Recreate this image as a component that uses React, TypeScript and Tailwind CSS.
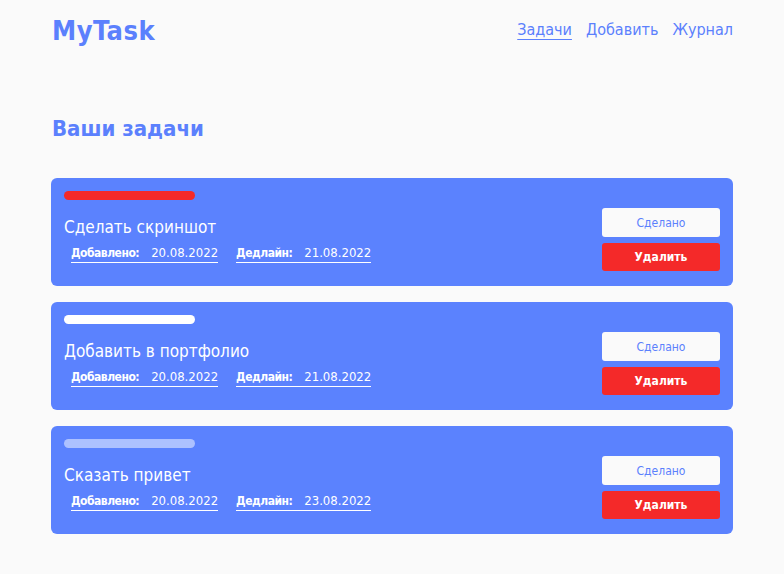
import React from "react";

const tasks = [
  { title: "Сделать скриншот", added: "20.08.2022", deadline: "21.08.2022", bar: "bg-[#f42929]" },
  { title: "Добавить в портфолио", added: "20.08.2022", deadline: "21.08.2022", bar: "bg-white" },
  { title: "Сказать привет", added: "20.08.2022", deadline: "23.08.2022", bar: "bg-white/50" },
];

export default function App() {
  return (
    <div
      className="min-h-screen bg-[#fafafa] text-[#5b80fd] font-stretch-condensed"
      style={{ fontFamily: '"DejaVu Sans Condensed", "DejaVu Sans", sans-serif' }}
    >
      <div className="mx-[51px]">
        <header className="flex items-center justify-between pt-[14px] h-[46px]">
          <div className="text-[27px] font-bold leading-none tracking-[0.5px] pl-px">MyTask</div>
          <nav className="flex gap-[14px] text-[16px] leading-none">
            <a className="underline underline-offset-[4px] decoration-1">Задачи</a>
            <a>Добавить</a>
            <a>Журнал</a>
          </nav>
        </header>
        <h1 className="mt-[72px] text-[22px] font-bold leading-none pl-px">Ваши задачи</h1>
        <div className="mt-[38px] flex flex-col gap-4">
          {tasks.map((t) => (
            <div key={t.title} className="flex justify-between rounded-[6px] bg-[#5b82fe] px-[13px] h-[108px]">
              <div className="flex flex-col pt-[13px]">
                <div className={`h-[9px] w-[131px] rounded-full ${t.bar}`} />
                <div className="mt-[19px] text-[17px] leading-none text-white">{t.title}</div>
                <div className="mt-[8px] ml-[7px] flex items-baseline gap-[18px] text-white leading-none">
                  <span className="border-b border-white pb-[2px]">
                    <span className="font-bold text-[12px] tracking-[-0.5px]">Добавлено:</span>
                    <span className="ml-[12px] text-[13px]">{t.added}</span>
                  </span>
                  <span className="border-b border-white pb-[2px]">
                    <span className="font-bold text-[12px] tracking-[-0.5px]">Дедлайн:</span>
                    <span className="ml-[12px] text-[13px]">{t.deadline}</span>
                  </span>
                </div>
              </div>
              <div className="flex flex-col gap-[6px] w-[118px] pt-[30px]">
                <button className="h-[29px] rounded-[3px] bg-[#fafafa] text-[12px] text-[#5b80fd]">Сделано</button>
                <button className="h-[28px] rounded-[3px] bg-[#f42929] text-[12px] font-bold text-white">Удалить</button>
              </div>
            </div>
          ))}
        </div>
      </div>
    </div>
  );
}
